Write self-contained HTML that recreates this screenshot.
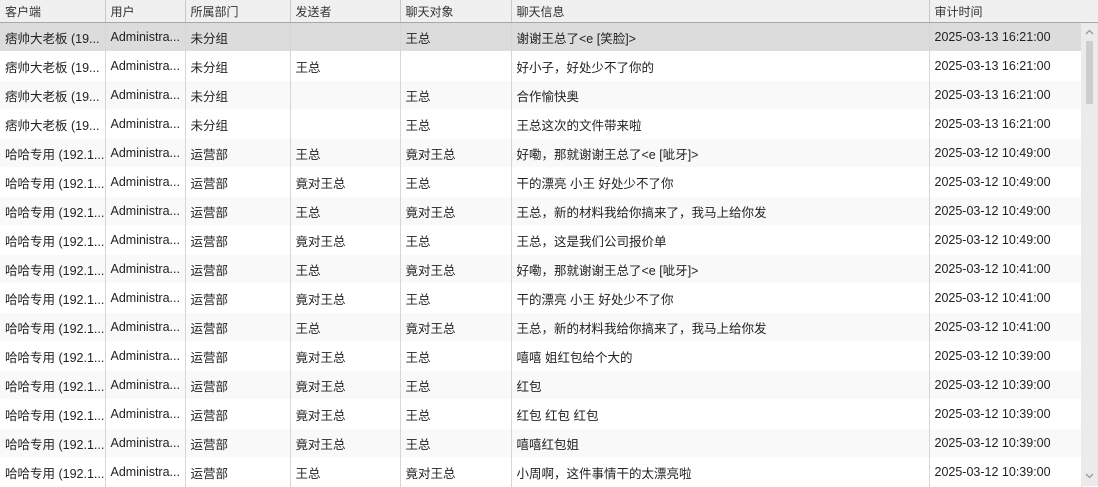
<!DOCTYPE html><html><head><style>
body{margin:0;width:1098px;height:486px;overflow:hidden;background:#fff;font-family:"Liberation Sans","Noto Sans CJK SC",sans-serif;font-size:12.5px;color:#222}
table{border-collapse:collapse;table-layout:fixed;position:absolute;left:0;top:0;width:1081px}
td,th{height:28px;padding:0 0 0 5px;white-space:nowrap;overflow:hidden;text-align:left;font-weight:normal;border-right:1px solid #d6d6d6;border-bottom:1px solid transparent}
th{height:22px;background:#f0f0f0;border-bottom:1px solid #a8a8a8;border-right:1px solid #c8c8c8;color:#333;font-size:12px}
tr:nth-child(even) td{background:#f9f9f9}
tr.sel td{background:#dcdcdc}
.sb{position:absolute;left:1081px;top:23px;width:17px;height:463px;background:#ebebeb}
.th{position:absolute;left:5px;top:18px;width:7px;height:63px;background:#cdcdcd}
.hf{position:absolute;left:1081px;top:0;width:17px;height:23px;background:#f0f0f0;border-bottom:1px solid #a8a8a8;box-sizing:border-box}
svg{position:absolute;left:4px}
</style></head><body>
<table>
<colgroup><col style="width:105px"><col style="width:80px"><col style="width:105px"><col style="width:110px"><col style="width:111px"><col style="width:418px"><col style="width:152px"></colgroup>
<tr><th>客户端</th><th>用户</th><th>所属部门</th><th>发送者</th><th>聊天对象</th><th>聊天信息</th><th>审计时间</th></tr>
<tr class="sel"><td>痞帅大老板 (19...</td><td>Administra...</td><td>未分组</td><td></td><td>王总</td><td>谢谢王总了&lt;e [笑脸]&gt;</td><td>2025-03-13 16:21:00</td></tr>
<tr><td>痞帅大老板 (19...</td><td>Administra...</td><td>未分组</td><td>王总</td><td></td><td>好小子，好处少不了你的</td><td>2025-03-13 16:21:00</td></tr>
<tr><td>痞帅大老板 (19...</td><td>Administra...</td><td>未分组</td><td></td><td>王总</td><td>合作愉快奥</td><td>2025-03-13 16:21:00</td></tr>
<tr><td>痞帅大老板 (19...</td><td>Administra...</td><td>未分组</td><td></td><td>王总</td><td>王总这次的文件带来啦</td><td>2025-03-13 16:21:00</td></tr>
<tr><td>哈哈专用 (192.1...</td><td>Administra...</td><td>运营部</td><td>王总</td><td>竟对王总</td><td>好嘞，那就谢谢王总了&lt;e [呲牙]&gt;</td><td>2025-03-12 10:49:00</td></tr>
<tr><td>哈哈专用 (192.1...</td><td>Administra...</td><td>运营部</td><td>竟对王总</td><td>王总</td><td>干的漂亮 小王 好处少不了你</td><td>2025-03-12 10:49:00</td></tr>
<tr><td>哈哈专用 (192.1...</td><td>Administra...</td><td>运营部</td><td>王总</td><td>竟对王总</td><td>王总，新的材料我给你搞来了，我马上给你发</td><td>2025-03-12 10:49:00</td></tr>
<tr><td>哈哈专用 (192.1...</td><td>Administra...</td><td>运营部</td><td>竟对王总</td><td>王总</td><td>王总，这是我们公司报价单</td><td>2025-03-12 10:49:00</td></tr>
<tr><td>哈哈专用 (192.1...</td><td>Administra...</td><td>运营部</td><td>王总</td><td>竟对王总</td><td>好嘞，那就谢谢王总了&lt;e [呲牙]&gt;</td><td>2025-03-12 10:41:00</td></tr>
<tr><td>哈哈专用 (192.1...</td><td>Administra...</td><td>运营部</td><td>竟对王总</td><td>王总</td><td>干的漂亮 小王 好处少不了你</td><td>2025-03-12 10:41:00</td></tr>
<tr><td>哈哈专用 (192.1...</td><td>Administra...</td><td>运营部</td><td>王总</td><td>竟对王总</td><td>王总，新的材料我给你搞来了，我马上给你发</td><td>2025-03-12 10:41:00</td></tr>
<tr><td>哈哈专用 (192.1...</td><td>Administra...</td><td>运营部</td><td>竟对王总</td><td>王总</td><td>嘻嘻 姐红包给个大的</td><td>2025-03-12 10:39:00</td></tr>
<tr><td>哈哈专用 (192.1...</td><td>Administra...</td><td>运营部</td><td>竟对王总</td><td>王总</td><td>红包</td><td>2025-03-12 10:39:00</td></tr>
<tr><td>哈哈专用 (192.1...</td><td>Administra...</td><td>运营部</td><td>竟对王总</td><td>王总</td><td>红包 红包 红包</td><td>2025-03-12 10:39:00</td></tr>
<tr><td>哈哈专用 (192.1...</td><td>Administra...</td><td>运营部</td><td>竟对王总</td><td>王总</td><td>嘻嘻红包姐</td><td>2025-03-12 10:39:00</td></tr>
<tr><td>哈哈专用 (192.1...</td><td>Administra...</td><td>运营部</td><td>王总</td><td>竟对王总</td><td>小周啊，这件事情干的太漂亮啦</td><td>2025-03-12 10:39:00</td></tr>
</table>
<div class="hf"></div>
<div class="sb"><svg style="top:6px" width="9" height="6"><path d="M1 5L4.5 1.5L8 5" stroke="#999" stroke-width="1.3" fill="none"/></svg><div class="th"></div><svg style="top:450px" width="9" height="6"><path d="M1 1L4.5 4.5L8 1" stroke="#999" stroke-width="1.3" fill="none"/></svg></div>
</body></html>
